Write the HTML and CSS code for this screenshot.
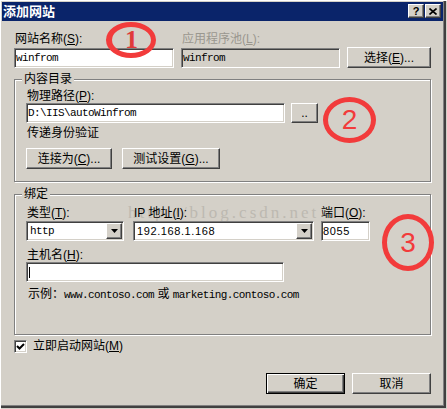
FILE: index.html
```html
<!DOCTYPE html>
<html lang="zh-CN">
<head>
  <meta charset="UTF-8">
  <link rel="stylesheet" href="styles.css">
  <title>添加网站</title>
</head>
<body>

<div class="window">
  <div class="titlebar">
    <span class="title">添加网站</span>
    <div class="tb-buttons">
      <span class="tb-btn raised">?</span>
      <span class="tb-btn raised">
        <svg width="8" height="7" viewBox="0 0 8 7"><path d="M0.5 0.5 L7.5 6.5 M7.5 0.5 L0.5 6.5" stroke="#000" stroke-width="1.6" fill="none"/></svg>
      </span>
    </div>
  </div>

  <div class="content">
    <div class="top-row">
      <span class="lbl">网站名称(<u>S</u>):</span>
      <span class="lbl disabled">应用程序池(<u>L</u>):</span>
      <span></span>
      <div class="input sunken mono">winfrom</div>
      <div class="input sunken readonly mono">winfrom</div>
      <button class="btn raised">选择(<u>E</u>)...</button>
    </div>

    <div class="group group-content">
      <span class="legend">内容目录</span>
      <span class="lbl">物理路径(<u>P</u>):</span>
      <div class="path-row">
        <div class="input sunken mono path">D:\IIS\autoWinfrom</div>
        <button class="btn raised dots">..</button>
      </div>
      <span class="lbl note">传递身份验证</span>
      <div class="btn-row">
        <button class="btn raised connect">连接为(<u>C</u>)...</button>
        <button class="btn raised test">测试设置(<u>G</u>)...</button>
      </div>
    </div>

    <div class="group group-binding">
      <span class="legend">绑定</span>
      <div class="bind-grid">
        <span class="lbl">类型(<u>T</u>):</span>
        <span class="lbl">IP 地址(<u>I</u>):</span>
        <span class="lbl port-lbl">端口(<u>O</u>):</span>
        <div class="select sunken type">
          <span class="val mono">http</span>
          <span class="arrow raised"><svg width="7" height="4" viewBox="0 0 7 4"><path d="M0 0 H7 L3.5 4 Z" fill="#000"/></svg></span>
        </div>
        <div class="select sunken ip">
          <span class="val num">192.168.1.168</span>
          <span class="arrow raised"><svg width="7" height="4" viewBox="0 0 7 4"><path d="M0 0 H7 L3.5 4 Z" fill="#000"/></svg></span>
        </div>
        <div class="input sunken num port">8055</div>
      </div>
      <span class="lbl host-lbl">主机名(<u>H</u>):</span>
      <div class="input sunken host"><span class="caret"></span></div>
      <div class="example">示例：<span class="mono">www.contoso.com</span> 或 <span class="mono">marketing.contoso.com</span></div>
    </div>

    <div class="check-row">
      <span class="checkbox sunken">
        <svg width="9" height="9" viewBox="0 0 9 9"><polyline points="1,4 3.5,6.5 8,2" stroke="#000" stroke-width="2" fill="none"/></svg>
      </span>
      <span>立即启动网站(<u>M</u>)</span>
    </div>

    <div class="actions">
      <button class="btn default">确定</button>
      <button class="btn raised">取消</button>
    </div>
  </div>

  <div class="watermark">http://blog.csdn.net</div>
  <div class="mark m1">1</div>
  <div class="mark m2">2</div>
  <div class="mark m3">3</div>
</div>

</body>
</html>
```

FILE: styles.css
```css
body {
  margin: 0;
  background: #fff;
  font: 12px/14px "Liberation Sans", "Noto Sans CJK SC", sans-serif;
  color: #000;
}

.window {
  position: relative;
  z-index: 0;
  width: 447px;
  height: 409px;
  box-sizing: border-box;
  padding: 2px 4px 4px 2px;
  background: #d4d0c8;
  box-shadow: inset 1px 1px #fff, inset -1px -1px #d4d0c8, inset -3px -3px #404040, inset -4px -4px #808080;
}

.raised {
  background: #d4d0c8;
  border: 1px solid;
  border-color: #fff #404040 #404040 #fff;
  box-shadow: inset -1px -1px #808080;
}

.sunken {
  border: 1px solid;
  border-color: #808080 #fff #fff #808080;
  box-shadow: inset 1px 1px #404040, inset -1px -1px #d4d0c8;
}

/* title bar */
.titlebar {
  height: 19px;
  box-sizing: border-box;
  padding: 2px 2px 0 1px;
  background: #0a246a;
  display: flex;
  justify-content: space-between;
  align-items: flex-start;
}
.title {
  color: #fff;
  font-weight: bold;
  font-size: 13px;
  line-height: 15px;
}
.tb-buttons {
  display: flex;
  gap: 1px;
}
.tb-btn {
  width: 16px;
  height: 14px;
  box-sizing: border-box;
  display: flex;
  align-items: center;
  justify-content: center;
  font: bold 11px/12px "Liberation Sans", sans-serif;
}

.content {
  padding: 0 12px;
}

.lbl {
  padding-left: 1px;
  white-space: nowrap;
}
.disabled {
  color: #9a978f;
}

.input {
  box-sizing: border-box;
  height: 20px;
  padding: 0 1px;
  background: #fff;
  display: flex;
  align-items: center;
  white-space: nowrap;
}
.readonly {
  background: #d4d0c8;
}
.mono {
  font-family: "Liberation Mono", "Noto Sans CJK SC", monospace;
  font-size: 11px;
  letter-spacing: -0.6px;
}
.num {
  font-family: "Liberation Sans", sans-serif;
  font-size: 11px;
  letter-spacing: 0.6px;
}

.btn {
  box-sizing: border-box;
  height: 21px;
  padding: 0;
  font: inherit;
  color: #000;
  cursor: pointer;
}
.default {
  background: #d4d0c8;
  border: 1px solid #000;
  box-shadow: inset 1px 1px #fff, inset -1px -1px #404040, inset -2px -2px #808080;
}

/* first row */
.top-row {
  display: grid;
  grid-template-columns: 160px 159px 84px;
  grid-template-rows: 14px 21px;
  column-gap: 7px;
  row-gap: 1px;
  margin-top: 11px;
}
.top-row .input {
  align-self: end;
}

/* group boxes */
.group {
  box-sizing: border-box;
  border: 1px solid #808080;
  box-shadow: inset 1px 1px #fff, 1px 1px #fff;
  padding: 0 11px;
  display: flex;
  flex-direction: column;
  align-items: flex-start;
}
.legend {
  margin: -8px 0 0 -4px;
  padding: 0 2px;
  background: #d4d0c8;
}

.group-content {
  margin-top: 11px;
  height: 103px;
}
.group-content > .lbl {
  margin-top: 3px;
}
.path-row {
  display: flex;
  gap: 6px;
}
.path {
  width: 259px;
}
.dots {
  width: 27px;
  height: 20px;
  line-height: 10px;
}
.btn-row {
  display: flex;
  gap: 10px;
  margin-top: 8px;
}
.connect {
  width: 86px;
}
.test {
  width: 98px;
}

.group-binding {
  margin-top: 12px;
  height: 141px;
}
.bind-grid {
  display: grid;
  grid-template-columns: 107px 188px 49px;
  grid-template-rows: 14px 20px;
  row-gap: 1px;
  margin-top: 5px;
}
.port-lbl {
  margin-left: -1px;
}
.select {
  box-sizing: border-box;
  height: 20px;
  padding: 1px;
  background: #fff;
  display: flex;
}
.select.type {
  width: 98px;
}
.select.ip {
  width: 181px;
}
.select .val {
  flex: 1;
  padding-left: 2px;
  display: flex;
  align-items: center;
}
.arrow {
  width: 16px;
  height: 16px;
  box-sizing: border-box;
  display: flex;
  align-items: center;
  justify-content: center;
}
.port {
  width: 49px;
}
.host-lbl {
  margin-top: 7px;
}
.host {
  width: 258px;
  padding-left: 2px;
}
.caret {
  width: 1px;
  height: 11px;
  background: #000;
}
.example {
  margin-top: 5px;
  padding-left: 2px;
  white-space: nowrap;
}

/* bottom */
.check-row {
  display: flex;
  align-items: center;
  gap: 6px;
  margin-top: 5px;
  line-height: 13px;
}
.checkbox {
  width: 13px;
  height: 13px;
  box-sizing: border-box;
  background: #fff;
  display: flex;
  align-items: center;
  justify-content: center;
}
.actions {
  display: flex;
  justify-content: flex-end;
  gap: 7px;
  margin-top: 20px;
}
.actions .btn {
  width: 79px;
}

/* overlays */
.watermark {
  position: absolute;
  left: 128px;
  top: 203px;
  z-index: -1;
  font: 17px/20px "Liberation Serif", serif;
  letter-spacing: 3px;
  color: #bdb9b1;
  white-space: nowrap;
}
.mark {
  position: absolute;
  z-index: 2;
  box-sizing: border-box;
  border: 5px solid #f23b3b;
  border-radius: 50%;
  display: flex;
  align-items: center;
  justify-content: center;
  color: #f23b3b;
  font: 28px/28px "Liberation Sans", sans-serif;
}
.m1 {
  left: 106px;
  top: 22px;
  width: 50px;
  height: 36px;
  border-width: 5px 5px 5px 6px;
  color: #e0393a;
  font: bold 26px/26px "Liberation Serif", serif;
}
.m2 {
  left: 323px;
  top: 97px;
  width: 53px;
  height: 46px;
}
.m3 {
  left: 382px;
  top: 214px;
  width: 52px;
  height: 57px;
}
```
